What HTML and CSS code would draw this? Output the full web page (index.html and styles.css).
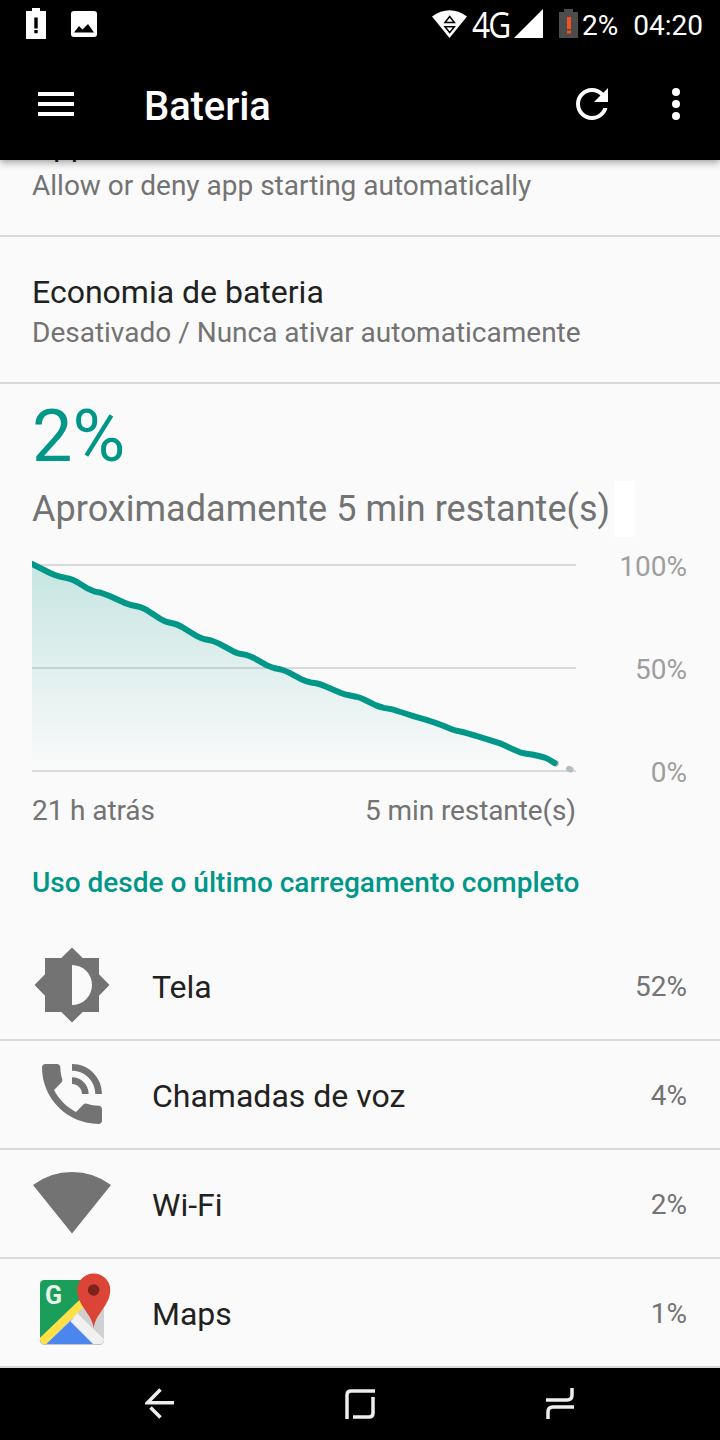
FILE: index.html
```html
<!DOCTYPE html>
<html lang="pt-BR">
<head>
    <meta charset="UTF-8">
    <meta name="viewport" content="width=device-width, initial-scale=1.0">
    <title>Bateria</title>
    <link rel="stylesheet" href="styles.css">
</head>
<body>
    <div class="status-bar">
        <div class="status-left">
            <svg width="20" height="32" viewBox="0 0 20 32"><path fill="#fff" d="M0 3h6V0h8v3h6v28H0z"/><path d="M8.3 9.5h3.4v11H8.3zM8.3 22h3.4v3.2H8.3z"/></svg>
            <svg width="26" height="26" viewBox="0 0 26 26"><rect width="26" height="26" rx="3" fill="#fff"/><path d="M3 21.5l5-6.5 3.500 3.500 5.500-5.500 6 8.500z"/></svg>
        </div>
        <div class="status-right">
            <svg width="35" height="28" viewBox="0 0 35 28"><path fill="#fff" d="M0 6.500Q17.500-6 35 6.500L17.500 28z"/><path fill="none" stroke="#000" stroke-width="1.500" d="M13 12.500h9.400L17.700 6.500zM13 16.800h9.400L17.700 22.500z"/></svg>
            <span class="network">4G</span>
            <svg class="signal" width="29" height="29" viewBox="0 0 29 29"><path fill="#fff" d="M29 0v29H0z"/></svg>
            <svg class="status-battery" width="19" height="29" viewBox="0 0 19 29"><path fill="#4c4c4c" d="M0 3h5V0h9v3h5v26H0z"/><path fill="#f4511e" d="M8 8h4v12H8zM8 21.500h4v3H8z"/></svg>
            <span class="status-text">2%</span>
            <span class="status-text clock">04:20</span>
        </div>
    </div>

    <div class="app-bar">
        <svg width="36" height="24" viewBox="0 0 36 24"><path fill="#fff" d="M0 0h36v4H0zM0 10h36v4H0zM0 20h36v4H0z"/></svg>
        <h1>Bateria</h1>
        <svg class="refresh" width="48" height="48" viewBox="0 0 24 24"><path fill="#fff" d="M17.650 6.350C16.200 4.900 14.210 4 12 4c-4.420 0-7.990 3.580-7.990 8s3.570 8 7.990 8c3.730 0 6.840-2.550 7.730-6h-2.080c-.820 2.330-3.040 4-5.650 4-3.310 0-6-2.690-6-6s2.690-6 6-6c1.660 0 3.140.690 4.220 1.780L13 11h7V4l-2.350 2.350z"/></svg>
        <svg width="8" height="32" viewBox="0 0 8 32"><g fill="#fff"><circle cx="4" cy="4" r="4"/><circle cx="4" cy="16" r="4"/><circle cx="4" cy="28" r="4"/></g></svg>
    </div>

    <main class="content">
        <div class="pref pref-first">
            <div class="pref-title">App auto start</div>
            <div class="pref-summary">Allow or deny app starting automatically</div>
        </div>
        <div class="pref">
            <div class="pref-title">Economia de bateria</div>
            <div class="pref-summary">Desativado / Nunca ativar automaticamente</div>
        </div>

        <section class="battery">
            <div class="level">2%</div>
            <div class="remaining"><span>Aproximadamente 5 min restante(s)</span><i class="patch"></i></div>
            <div class="chart">
                <svg width="544" height="220" viewBox="0 0 544 220">
                    <defs>
                        <linearGradient id="fade" x1="0" y1="8" x2="0" y2="215" gradientUnits="userSpaceOnUse">
                            <stop offset="0" stop-color="#009688" stop-opacity=".21"/>
                            <stop offset="1" stop-color="#009688" stop-opacity="0"/>
                        </linearGradient>
                    </defs>
                    <path fill="#dadada" d="M0 8h544v2H0zM0 111h544v2H0zM0 214h544v2H0z"/>
                    <path fill="url(#fade)" d="M0 8L23 19.300 41.300 24 59.700 34.700 73 38 96.300 48.300 111.300 52 132.300 65.300 146.300 69 169 82.300 183 85.700 204.700 97 218 100 239 111.300 253 114.700 274.700 125.700 288 128 313 138.500 328 141.700 348 151 363 154 383 160.700 403 166 419.700 173.300 434.700 176.700 468 187.300 488 196.300 506.300 199.700 514.700 202.300 523.300 207.300V214H0z"/>
                    <path class="forecast" d="M522 206.500l2 1M537 212.800l1.500.7"/>
                    <path class="history" d="M-6 5L0 8 18 17Q23 19.300 28 20.600L37 22.700Q41.300 24 45 26L56 32.700Q59.700 34.700 63 35.600L69 36.800Q73 38 77 39.800L92 46.600Q96.300 48.300 100 49.300L107 50.700Q111.300 52 115 54.200L128.500 63Q132.300 65.300 136 66.300L142.500 67.700Q146.300 69 150 71L165 80.200Q169 82.300 173 83.300L179 84.500Q183 85.700 187 87.600L201 95.200Q204.700 97 208 97.800L214 98.900Q218 100 222 102L235 109.400Q239 111.300 243 112.300L249 113.500Q253 114.700 257 116.600L270.500 123.800Q274.700 125.700 279 126.500L284 127.200Q288 128 292 129.700L309 137Q313 138.500 317 139.300L324 140.700Q328 141.700 332 143.500L344 149.400Q348 151 352 151.900L359 153.100Q363 154 383 160.700Q403 166 419.700 173.300Q423 174.500 427 175.200Q434.700 176.700 468 187.300Q484 194.700 488 196.300Q492 197.500 500 198.500Q510 200.500 514.700 202.300Q518 204 522.500 207"/>
                </svg>
                <div class="chart-scale">
                    <span>100%</span>
                    <span>50%</span>
                    <span>0%</span>
                </div>
            </div>
            <div class="chart-times">
                <span>21 h atrás</span>
                <span>5 min restante(s)</span>
            </div>
        </section>

        <h2>Uso desde o último carregamento completo</h2>

        <ul class="usage">
            <li>
                <svg width="80" height="80" viewBox="0 0 80 80"><path fill="#737373" fill-rule="evenodd" d="M40 2.500L50.700 13H67v16.300L77.500 40 67 50.700V67H50.700L40 77.500 29.300 67H13V50.700L2.500 40 13 29.300V13H29.300zM40 20V60A20 20 0 0 0 40 20z"/></svg>
                <span class="name">Tela</span>
                <span class="value">52%</span>
            </li>
            <li>
                <svg width="80" height="80" viewBox="0 0 24 24"><path fill="#737373" d="M20 15.500c-1.250 0-2.450-.2-3.570-.570-.350-.110-.740-.030-1.020.240l-2.200 2.200c-2.830-1.440-5.150-3.750-6.590-6.590l2.200-2.210c.280-.260.360-.650.250-1C8.700 6.450 8.500 5.250 8.500 4c0-.550-.450-1-1-1H4c-.550 0-1 .450-1 1 0 9.390 7.610 17 17 17 .550 0 1-.450 1-1v-3.500c0-.550-.450-1-1-1zM19 12h2c0-4.970-4.030-9-9-9v2c3.870 0 7 3.130 7 7zm-4 0h2c0-2.760-2.240-5-5-5v2c1.660 0 3 1.340 3 3z"/></svg>
                <span class="name">Chamadas de voz</span>
                <span class="value">4%</span>
            </li>
            <li>
                <svg width="80" height="80" viewBox="0 0 80 80"><path fill="#737373" d="M1 22Q18 9 40 9T79 22L40 70.500z"/></svg>
                <span class="name">Wi-Fi</span>
                <span class="value">2%</span>
            </li>
            <li>
                <svg width="80" height="80" viewBox="0 0 80 80">
                    <defs>
                        <clipPath id="tile"><rect x="8" y="8" width="64" height="64" rx="4.500"/></clipPath>
                    </defs>
                    <rect x="8" y="9" width="64" height="64" rx="4.500" fill="#c4c4c4"/>
                    <g clip-path="url(#tile)">
                        <path fill="#d0d0d0" d="M8 8h64v64H8z"/>
                        <path fill="#1b9e5a" d="M8 8h64L8 72z"/>
                        <path fill="#4a86ee" d="M8 78L41.500 46 72 78z"/>
                        <path fill="#f1f1f1" d="M38.500 49.500L45 41 76 71v8h-8z"/>
                        <path fill="#ffe047" d="M4 69.500L50 25.500 55.500 31 8 78z"/>
                    </g>
                    <text class="logo-letter" x="13" y="31.500">G</text>
                    <path fill="#db4437" d="M61.700 56.500C60.500 42 45.200 34 45.200 18a16.500 16.500 0 0 1 33 0C78.200 34 62.900 42 61.700 56.500z"/>
                    <circle cx="61.700" cy="18" r="5.800" fill="#7b231c"/>
                </svg>
                <span class="name">Maps</span>
                <span class="value">1%</span>
            </li>
        </ul>
    </main>

    <nav class="nav-bar">
        <svg width="30" height="32" viewBox="0 0 30 32"><path d="M15.500 1.500L2.500 14.800H29M5.500 19.500L15.500 29.500"/></svg>
        <svg width="30" height="32" viewBox="0 0 30 32"><path d="M2 31V7Q2 3 6 3H30M28 9V25Q28 29 24 29H8"/></svg>
        <svg width="30" height="32" viewBox="0 0 30 32"><path d="M1 12H22Q27 12 27 7V0M3 31V24Q3 19 8 19H29"/></svg>
    </nav>
</body>
</html>
```

FILE: styles.css
```css
* {
    box-sizing: border-box;
}
body {
    margin: 0;
    width: 720px;
    height: 1440px;
    display: flex;
    flex-direction: column;
    overflow: hidden;
    background-color: #fafafa;
    color: #212121;
    font-family: Roboto, sans-serif;
}
svg {
    display: block;
    flex: none;
}
.status-bar {
    height: 48px;
    flex: none;
    display: flex;
    justify-content: space-between;
    background-color: #000;
    color: #fff;
}
.status-left {
    display: flex;
    gap: 25px;
    align-items: center;
    padding-left: 26px;
}
.status-right {
    display: flex;
    align-items: center;
    padding-right: 17px;
}
.network {
    width: 38px;
    margin-left: 5px;
    font-family: "Open Sans", sans-serif;
    font-size: 36px;
    letter-spacing: -2px;
    transform: scaleX(0.88);
    transform-origin: left;
}
.signal {
    margin: 0 0 1px 4px;
}
.status-battery {
    margin: 0 4px 1px 16px;
}
.status-text {
    margin-top: 2px;
    font-size: 28px;
}
.clock {
    margin-left: 15px;
}
.app-bar {
    height: 112px;
    flex: none;
    display: flex;
    align-items: center;
    padding: 0 40px 0 38px;
    background-color: #000;
    color: #fff;
    box-shadow: 0 2px 8px rgba(0, 0, 0, 0.4);
    z-index: 1;
}
h1 {
    flex: 1;
    margin: 4px 0 0 70px;
    font-size: 40px;
    font-weight: 500;
    letter-spacing: -0.1px;
}
.refresh {
    margin-right: 56px;
}
.content {
    height: 1208px;
    flex: none;
    overflow: hidden;
}
.pref {
    height: 147px;
    padding-top: 36px;
    border-bottom: 2px solid #dadada;
}
.pref-first {
    margin-top: -70px;
}
.pref-title {
    padding-left: 32px;
    font-size: 32px;
    line-height: 38px;
}
.pref-summary {
    margin-top: 5px;
    padding-left: 32px;
    font-size: 28px;
    line-height: 34px;
    color: #737373;
}
.battery {
    height: 448px;
    padding: 11px 32px 0;
    color: #737373;
}
.level {
    font-size: 72px;
    line-height: 84px;
    color: #009688;
}
.remaining {
    display: flex;
    align-items: center;
    justify-content: space-between;
    width: 603px;
    height: 56px;
    margin-top: 2px;
    font-size: 36px;
    letter-spacing: 0.03px;
}
.patch {
    width: 21px;
    height: 56px;
    background-color: #fff;
}
.chart {
    display: flex;
    justify-content: space-between;
    height: 220px;
    margin-top: 19px;
}
.history {
    fill: none;
    stroke: #009688;
    stroke-width: 6;
    stroke-linecap: round;
    stroke-linejoin: round;
}
.forecast {
    fill: none;
    stroke: #b0bec5;
    stroke-width: 6;
    stroke-linecap: round;
}
.chart-scale {
    display: flex;
    flex-direction: column;
    gap: 69px;
    margin: -6px 1px 0 0;
    font-size: 28px;
    line-height: 34px;
    text-align: right;
    color: #9e9e9e;
}
.chart-times {
    display: flex;
    justify-content: space-between;
    width: 544px;
    margin-top: 18px;
    font-size: 28px;
    line-height: 34px;
    letter-spacing: -0.1px;
}
h2 {
    height: 100px;
    margin: 0;
    padding: 34px 32px 0;
    font-size: 28px;
    line-height: 34px;
    font-weight: 500;
    color: #009688;
}
.usage {
    margin: 0;
    padding: 0;
    list-style: none;
}
.usage li {
    display: flex;
    align-items: center;
    height: 109px;
    padding: 0 33px 1px 32px;
    border-bottom: 2px solid #dadada;
}
.name {
    flex: 1;
    margin: 4px 0 0 40px;
    font-size: 32px;
}
.value {
    margin-top: 3px;
    font-size: 28px;
    color: #737373;
}
.logo-letter {
    fill: #e8f5ee;
    font-size: 25px;
    font-weight: 700;
}
.nav-bar {
    height: 72px;
    flex: none;
    display: flex;
    align-items: center;
    justify-content: center;
    gap: 170px;
    background-color: #000;
}
.nav-bar svg {
    fill: none;
    stroke: #eee;
    stroke-width: 3.5;
}
```
